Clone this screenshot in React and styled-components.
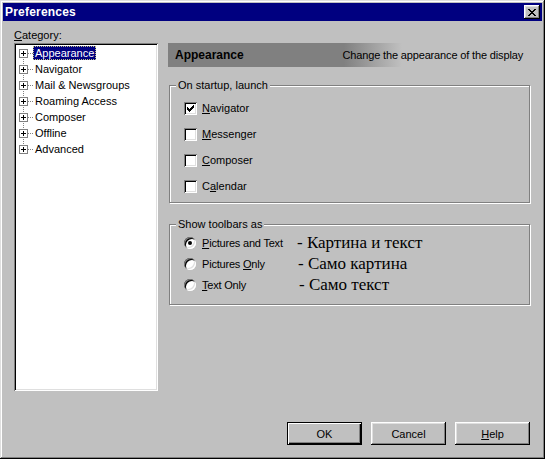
import styled, { createGlobalStyle, css } from "styled-components";

const GlobalStyle = createGlobalStyle`
  html, body { margin: 0; padding: 0; background: #c0c0c0; }
  body {
    font-family: "Liberation Sans", Arial, sans-serif;
    font-size: 11px;
    color: #000;
  }
  * { box-sizing: border-box; }
`;

const raised = css`
  box-shadow: inset -1px -1px #000, inset 1px 1px #fff, inset -2px -2px #808080,
    inset 2px 2px #dfdfdf;
`;

const sunken = css`
  box-shadow: inset 1px 1px #808080, inset -1px -1px #fff, inset 2px 2px #000,
    inset -2px -2px #dfdfdf;
`;

const Window = styled.div`
  width: 545px;
  height: 459px;
  padding: 3px;
  display: flex;
  flex-direction: column;
  background: #c0c0c0;
  box-shadow: inset -1px -1px #000, inset 1px 1px #dfdfdf, inset -2px -2px #808080,
    inset 2px 2px #fff;
`;

const TitleBar = styled.div`
  height: 18px;
  display: flex;
  align-items: center;
  justify-content: space-between;
  padding: 0 2px 0 2px;
  background: #000080;
  color: #fff;
`;

const Title = styled.span`
  font-weight: bold;
  font-size: 12px;
  letter-spacing: 0.2px;
`;

const CloseButton = styled.button`
  width: 16px;
  height: 14px;
  padding: 0;
  border: 0;
  display: flex;
  align-items: center;
  justify-content: center;
  background: #c0c0c0;
  ${raised}
`;

const Main = styled.div`
  display: flex;
  padding: 8px 11px 0 11px;
`;

const LeftColumn = styled.div`
  width: 144px;
  display: flex;
  flex-direction: column;
`;

const FieldLabel = styled.div`
  height: 13px;
  line-height: 13px;
  margin-bottom: 1px;
`;

const Mn = styled.span`
  text-decoration: underline;
  text-underline-offset: 1px;
`;

const Tree = styled.div`
  height: 348px;
  padding-top: 2px;
  background: #fff;
  ${sunken}
`;

const TreeRow = styled.div`
  position: relative;
  height: 16px;
  display: flex;
  align-items: center;
  padding-left: 5px;

  &::before {
    content: "";
    position: absolute;
    left: 9px;
    width: 1px;
    top: ${(p) => (p.$first ? "50%" : "0")};
    bottom: ${(p) => (p.$last ? "50%" : "0")};
    background-image: linear-gradient(to bottom, #808080 50%, transparent 50%);
    background-size: 1px 2px;
  }
`;

const Expander = styled.span`
  position: relative;
  z-index: 1;
  width: 9px;
  height: 9px;
  border: 1px solid #808080;
  background: #fff;
  display: flex;
`;

const Connector = styled.span`
  width: 5px;
  height: 1px;
  margin-top: 1px;
  background-image: linear-gradient(to right, #808080 50%, transparent 50%);
  background-size: 2px 1px;
`;

const TreeLabel = styled.span`
  height: 14px;
  line-height: 14px;
  padding: 0 2px;
  white-space: nowrap;
  ${(p) =>
    p.$selected &&
    css`
      background: #000080;
      color: #fff;
      outline: 1px dotted #c0c080;
      outline-offset: -1px;
    `}
`;

const RightColumn = styled.div`
  width: 363px;
  margin-left: 10px;
  display: flex;
  flex-direction: column;
`;

const PanelHeader = styled.div`
  margin-top: 14px;
  height: 24px;
  display: flex;
  align-items: center;
  justify-content: space-between;
  padding: 0 8px 0 7px;
  background: linear-gradient(to right, #808080 0, #808080 176px, #c0c0c0 234px);
`;

const PanelTitle = styled.span`
  font-weight: bold;
  font-size: 12px;
`;

const PanelDesc = styled.span`
  font-size: 11px;
  letter-spacing: -0.15px;
`;

const Group = styled.div`
  margin-top: ${(p) => p.$top}px;
  margin-left: 1px;
  width: 361px;
  display: flex;
  flex-direction: column;
  padding-bottom: ${(p) => p.$bottom}px;
  border: 1px solid #808080;
  box-shadow: inset 1px 1px #fff, 1px 1px #fff;
`;

const Legend = styled.div`
  align-self: flex-start;
  margin: -7px 0 0 6px;
  padding: 0 2px;
  height: 13px;
  line-height: 13px;
  background: #c0c0c0;
`;

const CheckList = styled.div`
  margin-top: 3px;
  display: flex;
  flex-direction: column;
`;

const CheckRow = styled.label`
  height: 26px;
  display: flex;
  align-items: center;
  padding-left: 14px;
`;

const CheckBox = styled.span`
  width: 13px;
  height: 13px;
  display: flex;
  align-items: center;
  justify-content: center;
  margin-right: 5px;
  background: #fff;
  ${sunken}
`;

const RadioList = styled.div`
  margin-top: 1px;
  display: flex;
  flex-direction: column;
`;

const RadioRow = styled.label`
  height: 21px;
  display: flex;
  align-items: center;
  padding-left: 14px;
`;

const Radio = styled.span`
  width: 12px;
  height: 12px;
  border-radius: 50%;
  margin-right: 6px;
  display: flex;
  align-items: center;
  justify-content: center;
  background: #fff;
  box-shadow: inset 1px 1px #808080, inset -1px -1px #fff, inset 2px 2px #000,
    inset -2px -2px #dfdfdf;

  &::after {
    content: "";
    width: 4px;
    height: 4px;
    border-radius: 50%;
    background: ${(p) => (p.$checked ? "#000" : "transparent")};
  }
`;

const RadioText = styled.span`
  width: 95px;
  white-space: nowrap;
  letter-spacing: -0.2px;
`;

const Translation = styled.span`
  margin-left: ${(p) => p.$shift}px;
  font-family: "Liberation Serif", "Times New Roman", serif;
  font-size: 17px;
  line-height: 1;
  white-space: nowrap;
`;

const Footer = styled.div`
  margin-top: auto;
  display: flex;
  justify-content: flex-end;
  gap: 9px;
  padding: 0 12px 11px 0;
`;

const Button = styled.button`
  width: 75px;
  height: 23px;
  padding: 0;
  border: 0;
  background: #c0c0c0;
  font-family: "Liberation Sans", Arial, sans-serif;
  font-size: 11px;
  color: #000;
  ${(p) =>
    p.$default
      ? css`
          box-shadow: inset 0 0 0 1px #000, inset 2px 2px #fff, inset -2px -2px #000,
            inset -3px -3px #808080;
        `
      : raised}
`;

const categories = [
  "Appearance",
  "Navigator",
  "Mail & Newsgroups",
  "Roaming Access",
  "Composer",
  "Offline",
  "Advanced",
];

const PlusIcon = () => (
  <svg width="7" height="7" viewBox="0 0 7 7" shapeRendering="crispEdges">
    <rect x="1" y="3" width="5" height="1" fill="#000" />
    <rect x="3" y="1" width="1" height="5" fill="#000" />
  </svg>
);

const CheckIcon = () => (
  <svg width="7" height="7" viewBox="0 0 7 7" shapeRendering="crispEdges">
    <path d="M0 2h1v1h1v1h1v-1h1v-1h1v-1h1v-1h1v3h-1v1h-1v1h-1v1h-1v1h-1v-1h-1v-1h-1z" fill="#000" />
  </svg>
);

const CloseIcon = () => (
  <svg width="8" height="7" viewBox="0 0 8 7" shapeRendering="crispEdges">
    <path
      d="M0 0h2v1h1v1h2v-1h1v-1h2v1h-1v1h-1v1h-1v1h1v1h1v1h1v1h-2v-1h-1v-1h-2v1h-1v1h-2v-1h1v-1h1v-1h1v-1h-1v-1h-1v-1h-1z"
      fill="#000"
    />
  </svg>
);

const startup = [
  { label: "Navigator", key: 0, checked: true },
  { label: "Messenger", key: 0 },
  { label: "Composer", key: 0 },
  { label: "Calendar", key: 1 },
];

const toolbars = [
  { label: "Pictures and Text", mn: [0, 1], ru: "- Картина и текст", shift: 0, checked: true },
  { label: "Pictures Only", mn: [9, 10], ru: "- Само картина", shift: 1 },
  { label: "Text Only", mn: [0, 1], ru: "- Само текст", shift: 2 },
];

function withMnemonic(text, start, end) {
  return (
    <>
      {text.slice(0, start)}
      <Mn>{text.slice(start, end)}</Mn>
      {text.slice(end)}
    </>
  );
}

function App() {
  return (
    <>
      <GlobalStyle />
      <Window>
        <TitleBar>
          <Title>Preferences</Title>
          <CloseButton>
            <CloseIcon />
          </CloseButton>
        </TitleBar>

        <Main>
          <LeftColumn>
            <FieldLabel>
              <Mn>C</Mn>ategory:
            </FieldLabel>
            <Tree>
              {categories.map((name, i) => (
                <TreeRow key={name} $first={i === 0} $last={i === categories.length - 1}>
                  <Expander>
                    <PlusIcon />
                  </Expander>
                  <Connector />
                  <TreeLabel $selected={i === 0}>{name}</TreeLabel>
                </TreeRow>
              ))}
            </Tree>
          </LeftColumn>

          <RightColumn>
            <PanelHeader>
              <PanelTitle>Appearance</PanelTitle>
              <PanelDesc>Change the appearance of the display</PanelDesc>
            </PanelHeader>

            <Group $top={18} $bottom={3}>
              <Legend>On startup, launch</Legend>
              <CheckList>
                {startup.map((item) => (
                  <CheckRow key={item.label}>
                    <CheckBox>{item.checked && <CheckIcon />}</CheckBox>
                    {withMnemonic(item.label, item.key, item.key + 1)}
                  </CheckRow>
                ))}
              </CheckList>
            </Group>

            <Group $top={21} $bottom={9}>
              <Legend>Show toolbars as</Legend>
              <RadioList>
                {toolbars.map((item) => (
                  <RadioRow key={item.label}>
                    <Radio $checked={item.checked} />
                    <RadioText>{withMnemonic(item.label, item.mn[0], item.mn[1])}</RadioText>
                    <Translation $shift={item.shift}>{item.ru}</Translation>
                  </RadioRow>
                ))}
              </RadioList>
            </Group>
          </RightColumn>
        </Main>

        <Footer>
          <Button $default>OK</Button>
          <Button>Cancel</Button>
          <Button>
            <Mn>H</Mn>elp
          </Button>
        </Footer>
      </Window>
    </>
  );
}

export default App;
